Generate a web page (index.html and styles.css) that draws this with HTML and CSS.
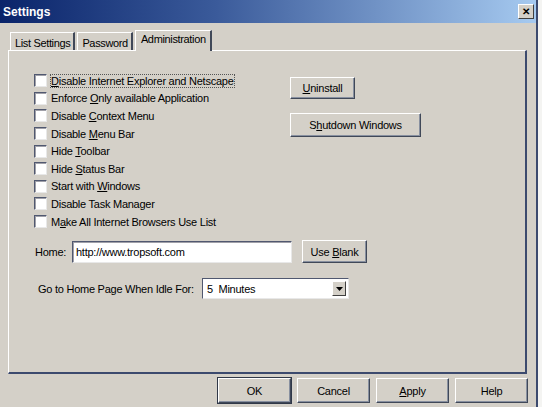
FILE: index.html
```html
<!DOCTYPE html>
<html lang="en">
<head>
  <meta charset="UTF-8">
  <title>Settings</title>
  <link rel="stylesheet" href="styles.css">
</head>
<body>

<div class="window">
  <div class="titlebar">
    <span class="title">Settings</span>
    <span class="close">&#x2715;</span>
  </div>

  <div class="tabs">
    <div class="tab">List Settings</div>
    <div class="tab">Password</div>
    <div class="tab active">Administration</div>
  </div>

  <div class="panel">
    <div class="top-area">
      <div class="checks">
        <label class="check focused"><span class="box"></span><span><u>D</u>isable Internet Explorer and Netscape</span></label>
        <label class="check"><span class="box"></span><span>Enforce <u>O</u>nly available Application</span></label>
        <label class="check"><span class="box"></span><span>Disable <u>C</u>ontext Menu</span></label>
        <label class="check"><span class="box"></span><span>Disable <u>M</u>enu Bar</span></label>
        <label class="check"><span class="box"></span><span>Hide <u>T</u>oolbar</span></label>
        <label class="check"><span class="box"></span><span>Hide <u>S</u>tatus Bar</span></label>
        <label class="check"><span class="box"></span><span>Start with <u>W</u>indows</span></label>
        <label class="check"><span class="box"></span><span>Disable Task Manager</span></label>
        <label class="check"><span class="box"></span><span>M<u>a</u>ke All Internet Browsers Use List</span></label>
      </div>
      <div class="side-buttons">
        <div class="btn uninstall"><span><u>U</u>ninstall</span></div>
        <div class="btn shutdown"><span>S<u>h</u>utdown Windows</span></div>
      </div>
    </div>

    <div class="home-row">
      <span class="home-label">Home:</span>
      <div class="field">http://www.tropsoft.com</div>
      <div class="btn blank"><span>Use <u>B</u>lank</span></div>
    </div>

    <div class="idle-row">
      <span class="idle-label">Go to Home Page When Idle For:</span>
      <div class="select">
        <span class="select-text">5&nbsp; Minutes</span>
        <span class="arrow"><svg width="7" height="4" viewBox="0 0 7 4"><path d="M0 0h7L3.5 4z" fill="#000"/></svg></span>
      </div>
    </div>
  </div>

  <div class="footer">
    <div class="btn wide default">OK</div>
    <div class="btn wide">Cancel</div>
    <div class="btn wide"><span><u>A</u>pply</span></div>
    <div class="btn wide">Help</div>
  </div>
</div>

</body>
</html>
```

FILE: styles.css
```css
body {
  margin: 0;
  background: #f4f4f2;
  font-family: "Liberation Sans", Arial, sans-serif;
  font-size: 11px;
  letter-spacing: -0.25px;
  color: #000;
}

.window {
  width: 536px;
  height: 407px;
  background: #d4d0c8;
  border-right: 2px solid #3c4a6e;
}

.titlebar {
  height: 23px;
  display: flex;
  align-items: center;
  justify-content: space-between;
  padding: 0 2px 0 3px;
  background: linear-gradient(to right, #0a246a 0%, #3a5a9a 40%, #a6caf0 100%);
}

.title {
  color: white;
  font-weight: bold;
  font-size: 12px;
  letter-spacing: 0;
}

.close {
  width: 14px;
  height: 13px;
  background: #d4d0c8;
  border: 1px solid;
  border-color: #fff #404040 #404040 #fff;
  font-size: 10px;
  font-weight: bold;
  display: flex;
  align-items: center;
  justify-content: center;
  line-height: 1;
}

.tabs {
  display: flex;
  align-items: flex-end;
  padding-left: 10px;
  margin-top: 8px;
  height: 19px;
}

.tab {
  height: 18px;
  padding: 2px 3px 0 4px;
  box-sizing: border-box;
  display: flex;
  align-items: center;
  border-top: 1px solid #fff;
  border-left: 1px solid #fff;
  border-right: 2px solid #404858;
  margin-right: 2px;
  letter-spacing: -0.35px;
}

.tab.active {
  height: 21px;
  padding: 2px 4px 0 5px;
  margin-bottom: -1px;
  background: #d4d0c8;
  position: relative;
  z-index: 1;
  align-items: flex-start;
}

.panel {
  margin-left: 8px;
  width: 516px;
  height: 321px;
  border-top: 1px solid #fff;
  border-left: 1px solid #fff;
  border-right: 2px solid #3c4a6e;
  border-bottom: 2px solid #3c4a6e;
}

.top-area {
  display: flex;
  padding-top: 21px;
}

.checks {
  display: flex;
  flex-direction: column;
  padding-left: 25px;
  width: 256px;
}

.check {
  display: flex;
  align-items: center;
  height: 17.6px;
  gap: 4px;
  white-space: nowrap;
}

.check.focused span:last-child {
  outline: 1px dotted #555;
}

.box {
  width: 11px;
  height: 11px;
  background: #fff;
  border-top: 1px solid #505870;
  border-left: 1px solid #505870;
  border-right: 1px solid #e8e8e8;
  border-bottom: 1px solid #e8e8e8;
  box-shadow: inset 1px 1px 0 #a0a0a8;
}

.side-buttons {
  display: flex;
  flex-direction: column;
  align-items: flex-start;
  gap: 14px;
  padding-top: 5px;
}

.btn {
  height: 22px;
  display: flex;
  align-items: center;
  justify-content: center;
  box-sizing: border-box;
  border: 1px solid;
  border-color: #fff #404858 #404858 #fff;
  box-shadow: inset -1px -1px 0 #8890a0;
  white-space: pre;
}

.uninstall {
  width: 65px;
}

.shutdown {
  width: 131px;
  height: 24px;
}

.home-row {
  display: flex;
  align-items: center;
  padding-left: 26px;
  margin-top: 10px;
}

.home-label {
  width: 37px;
}

.field {
  width: 220px;
  height: 22px;
  box-sizing: border-box;
  background: #fff;
  border-top: 1px solid #505870;
  border-left: 1px solid #505870;
  border-right: 1px solid #e8e8e8;
  border-bottom: 1px solid #e8e8e8;
  box-shadow: inset 1px 1px 0 #a0a0a8;
  padding: 0 3px;
  display: flex;
  align-items: center;
}

.blank {
  width: 65px;
  height: 23px;
  margin-left: 10px;
}

.idle-row {
  display: flex;
  align-items: center;
  padding-left: 29px;
  margin-top: 15px;
}

.idle-label {
  width: 164px;
}

.select {
  width: 147px;
  height: 21px;
  box-sizing: border-box;
  background: #fff;
  border-top: 1px solid #505870;
  border-left: 1px solid #505870;
  border-right: 1px solid #e8e8e8;
  border-bottom: 1px solid #e8e8e8;
  display: flex;
  align-items: center;
  justify-content: space-between;
  padding-left: 4px;
}

.arrow {
  width: 14px;
  height: 15px;
  margin-right: 2px;
  background: #d4d0c8;
  border: 1px solid;
  border-color: #fff #404040 #404040 #fff;
  display: flex;
  align-items: center;
  justify-content: center;
  box-sizing: border-box;
}

.footer {
  display: flex;
  gap: 6px;
  padding-left: 218px;
  margin-top: 4px;
}

.btn.wide {
  width: 73px;
  height: 25px;
}

.btn.default {
  outline: 1px solid #303848;
}
```
